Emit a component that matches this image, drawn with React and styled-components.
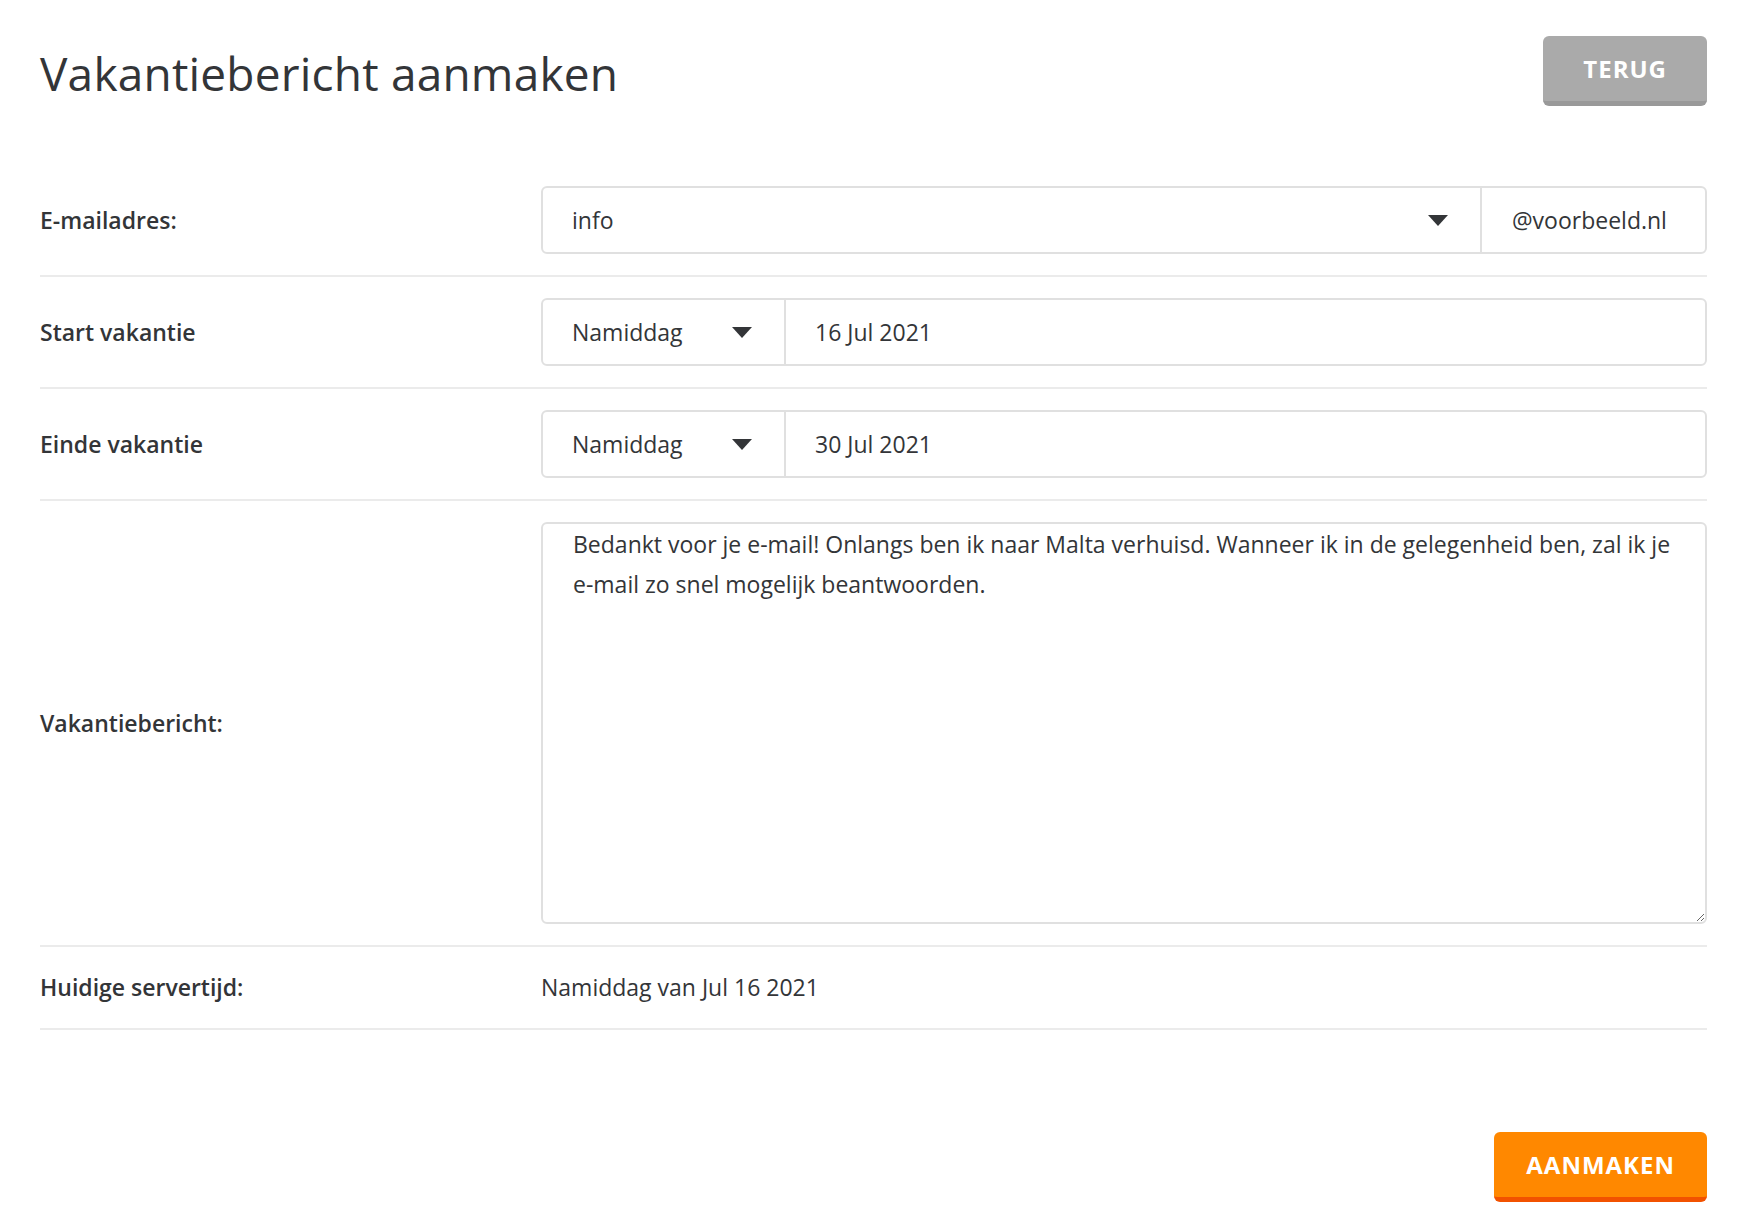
import React from "react";
import styled, { createGlobalStyle } from "styled-components";

const Global = createGlobalStyle`
  body { margin: 0; background: #fff; font-family: "Open Sans", sans-serif; color: #333538; }
`;
const Page = styled.div`padding: 36px 40px 0 40px;`;
const Header = styled.div`display: flex; justify-content: space-between; align-items: flex-start; margin-bottom: 59px;`;
const Title = styled.h1`margin: 6px 0 0; font-size: 46px; font-weight: 500; color: #333538; letter-spacing: 0.2px;`;
const Btn = styled.button`
  font-family: "Open Sans", sans-serif; font-weight: 700; font-size: 24px; letter-spacing: 1px;
  color: #fff; border: none; border-radius: 6px; cursor: pointer;
  background: ${p => p.$orange ? "#ff8800" : "#aaaaaa"};
  border-bottom: 5px solid ${p => p.$orange ? "#f25200" : "#999"};
  height: 70px;
  padding: 0 ${p => p.$orange ? "32px" : "40px"};
`;
const Row = styled.div`
  display: grid; grid-template-columns: 501px 1fr; align-items: center;
  padding: ${p => p.$pad || "21px 0"}; border-bottom: 2px solid #ebebeb;
  &:first-of-type { padding-top: 0; }
`;
const Label = styled.div`font-size: 23px; font-weight: 600; color: #333538;`;
const Group = styled.div`
  display: flex; height: 68px; border: 2px solid #e0e0e0; border-radius: 6px; box-sizing: border-box;
  font-size: 23px;
`;
const Cell = styled.div`
  display: flex; align-items: center; justify-content: space-between; box-sizing: border-box;
  padding: 0 ${p => p.$pr || "32px"} 0 ${p => p.$pl || "29px"};
  ${p => p.$w ? `width: ${p.$w}px;` : "flex: 1;"}
  & + & { border-left: 2px solid #e0e0e0; }
`;
const Caret = () => (
  <svg width="20" height="11" viewBox="0 0 20 11"><path d="M0 0h20L10 11z" fill="#333538" /></svg>
);
const Area = styled.textarea`
  width: 100%; height: 402px; box-sizing: border-box; border: 2px solid #e0e0e0; border-radius: 6px;
  font-family: "Open Sans", sans-serif; font-size: 23px; line-height: 40px; color: #333538;
  padding: 0 30px; resize: vertical; outline: none; display: block;
`;
const Value = styled.div`font-size: 23px;`;
const Footer = styled.div`display: flex; justify-content: flex-end; margin-top: 102px;`;

export default function App() {
  return (
    <Page>
      <Global />
      <Header>
        <Title>Vakantiebericht aanmaken</Title>
        <Btn>TERUG</Btn>
      </Header>
      <Row>
        <Label>E-mailadres:</Label>
        <Group>
          <Cell>info<Caret /></Cell>
          <Cell $w={225} $pl="30px" $pr="30px">@voorbeeld.nl</Cell>
        </Group>
      </Row>
      <Row>
        <Label>Start vakantie</Label>
        <Group>
          <Cell $w={241}>Namiddag<Caret /></Cell>
          <Cell>16 Jul 2021</Cell>
        </Group>
      </Row>
      <Row>
        <Label>Einde vakantie</Label>
        <Group>
          <Cell $w={241}>Namiddag<Caret /></Cell>
          <Cell>30 Jul 2021</Cell>
        </Group>
      </Row>
      <Row>
        <Label>Vakantiebericht:</Label>
        <Area defaultValue="Bedankt voor je e-mail! Onlangs ben ik naar Malta verhuisd. Wanneer ik in de gelegenheid ben, zal ik je e-mail zo snel mogelijk beantwoorden." />
      </Row>
      <Row $pad="24px 0 25px">
        <Label>Huidige servertijd:</Label>
        <Value>Namiddag van Jul 16 2021</Value>
      </Row>
      <Footer><Btn $orange>AANMAKEN</Btn></Footer>
    </Page>
  );
}
